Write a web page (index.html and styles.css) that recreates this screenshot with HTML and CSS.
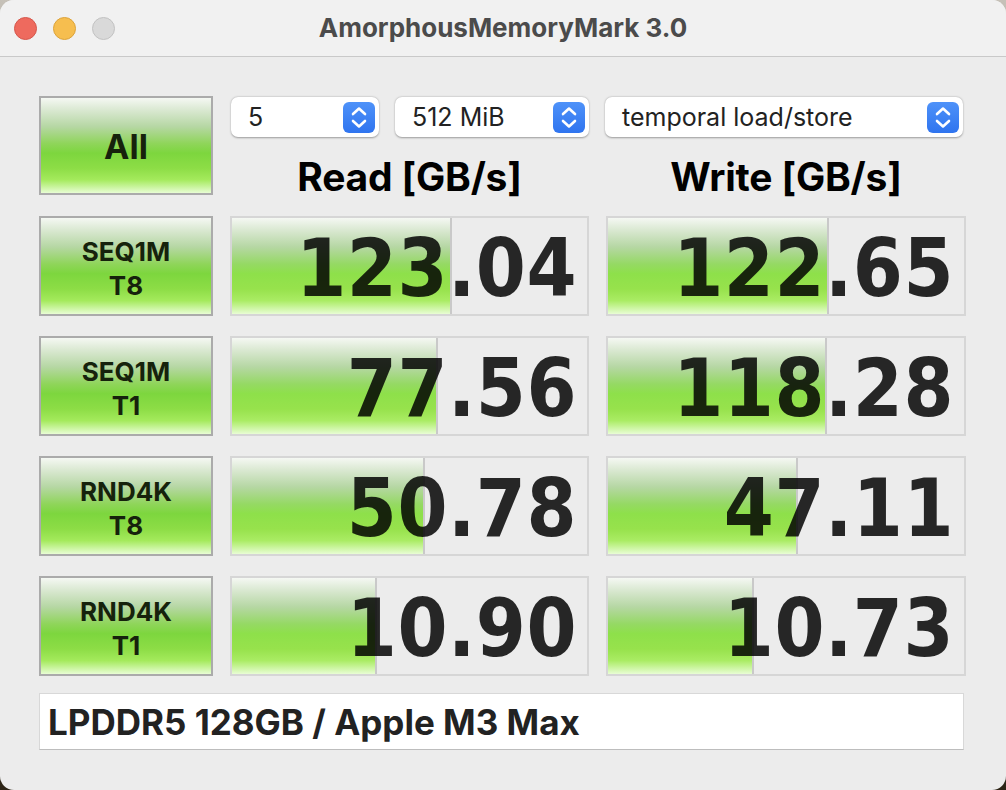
FILE: index.html
```html
<!DOCTYPE html>
<html lang="en">
<head>
  <meta charset="UTF-8">
  <meta name="viewport" content="width=device-width, initial-scale=1.0">
  <title>AmorphousMemoryMark 3.0</title>
  <link rel="stylesheet" href="styles.css">
</head>
<body>
  <div class="window">

    <!-- Title bar -->
    <div class="titlebar">
      <div class="lights">
        <span class="light red"></span>
        <span class="light yellow"></span>
        <span class="light gray"></span>
      </div>
      <div class="title">AmorphousMemoryMark 3.0</div>
    </div>

    <!-- Main content -->
    <div class="content">
      <div class="grid">
        <div class="btn btn-all">All</div>

        <div class="head">
          <div class="selects">
            <div class="select sel-count"><span>5</span><i class="stepper"><svg viewBox="0 0 32 31"><path d="M10 12 L16 6.5 L22 12 M10 19 L16 24.5 L22 19"/></svg></i></div>
            <div class="select sel-size"><span>512 MiB</span><i class="stepper"><svg viewBox="0 0 32 31"><path d="M10 12 L16 6.5 L22 12 M10 19 L16 24.5 L22 19"/></svg></i></div>
          </div>
          <h2>Read [GB/s]</h2>
        </div>

        <div class="head">
          <div class="selects">
            <div class="select sel-mode"><span>temporal load/store</span><i class="stepper"><svg viewBox="0 0 32 31"><path d="M10 12 L16 6.5 L22 12 M10 19 L16 24.5 L22 19"/></svg></i></div>
          </div>
          <h2>Write [GB/s]</h2>
        </div>

        <!-- SEQ1M T8 -->
        <div class="btn">SEQ1M<br>T8</div>
        <div class="score"><div class="fill" style="width: 62%"></div><span>123.04</span></div>
        <div class="score"><div class="fill" style="width: 62%"></div><span>122.65</span></div>

        <!-- SEQ1M T1 -->
        <div class="btn">SEQ1M<br>T1</div>
        <div class="score"><div class="fill" style="width: 58%"></div><span>77.56</span></div>
        <div class="score"><div class="fill" style="width: 61.6%"></div><span>118.28</span></div>

        <!-- RND4K T8 -->
        <div class="btn">RND4K<br>T8</div>
        <div class="score"><div class="fill" style="width: 54.3%"></div><span>50.78</span></div>
        <div class="score"><div class="fill" style="width: 53.5%"></div><span>47.11</span></div>

        <!-- RND4K T1 -->
        <div class="btn">RND4K<br>T1</div>
        <div class="score"><div class="fill" style="width: 40.8%"></div><span>10.90</span></div>
        <div class="score"><div class="fill" style="width: 40.9%"></div><span>10.73</span></div>
      </div>

      <div class="comment">LPDDR5 128GB / Apple M3 Max</div>
    </div>
  </div>
</body>
</html>
```

FILE: styles.css
```css
/* Basic styling */
body {
  margin: 0;
  background: linear-gradient(to bottom, #c6c1b8, #2c2416);
  font-family: Inter, "Liberation Sans", sans-serif;
  overflow: hidden;
}
.window {
  width: 1006px;
  height: 790px;
  background-color: #ececec;
  border-radius: 14px;
  overflow: hidden;
}

/* Title bar */
.titlebar {
  position: relative;
  height: 56px;
  background-color: #f1f1f1;
  border-bottom: 1px solid #c9c9c9;
  display: flex;
  align-items: center;
  justify-content: center;
}
.lights {
  position: absolute;
  left: 14px;
  top: 17px;
  display: flex;
  gap: 16px;
}
.light {
  width: 23px;
  height: 23px;
  border-radius: 50%;
  box-sizing: border-box;
}
.light.red {
  background-color: #ee6a5e;
  border: 1px solid #d5574c;
}
.light.yellow {
  background-color: #f6be4f;
  border: 1px solid #dca33a;
}
.light.gray {
  background-color: #d9d9d9;
  border: 1px solid #c2c2c2;
}
.title {
  font-size: 26px;
  font-weight: 700;
  color: #4b4b4b;
  letter-spacing: 0;
  margin-top: -1px;
}

/* Grid of buttons and results */
.content {
  padding: 39px 40px 0 39px;
}
.grid {
  display: grid;
  grid-template-columns: 174px 359px 360px;
  grid-auto-rows: 100px;
  column-gap: 17px;
  row-gap: 20px;
}
.btn {
  box-sizing: border-box;
  border: 2px solid #ababab;
  background: linear-gradient(to bottom, #f5f8f3 0%, #dbe9d3 12%, #b6d7a4 30%, #8fd55a 48%, #7dd63e 58%, #8ddd46 74%, #a4ea5c 86%, #e8fdd4 100%);
  color: #16220c;
  font-weight: 700;
  font-size: 26px;
  line-height: 34px;
  text-align: center;
  display: flex;
  align-items: center;
  justify-content: center;
  padding-top: 6px;
}
.btn-all {
  font-size: 34px;
  height: 99px;
  padding-top: 2px;
}

/* Column heads with select boxes */
.head {
  display: flex;
  flex-direction: column;
}
.selects {
  display: flex;
  gap: 16px;
  margin-top: 1px;
}
.select {
  box-sizing: border-box;
  height: 40px;
  background-color: #ffffff;
  border-radius: 7px;
  box-shadow: 0 0.5px 2px rgba(0, 0, 0, 0.35);
  display: flex;
  align-items: center;
  justify-content: space-between;
  padding: 0 4px 0 17px;
  font-size: 25px;
  color: #222222;
}
.sel-count {
  width: 148px;
  margin-left: 1px;
}
.sel-size {
  width: 194px;
}
.sel-mode {
  width: 358px;
  margin-left: -1px;
}
.stepper {
  width: 32px;
  height: 31px;
  border-radius: 6px;
  background: linear-gradient(to bottom, #4e92f9, #2f74ef);
  display: block;
}
.stepper svg {
  width: 32px;
  height: 31px;
  display: block;
}
.stepper path {
  fill: none;
  stroke: #ffffff;
  stroke-width: 2.6;
  stroke-linecap: round;
  stroke-linejoin: round;
}
.head h2 {
  margin: 18px 0 0;
  font-size: 39px;
  font-weight: 700;
  line-height: 44px;
  text-align: center;
  color: #000000;
  letter-spacing: -0.2px;
}

/* Score boxes */
.score {
  position: relative;
  box-sizing: border-box;
  border: 2px solid #d6d6d6;
  background-color: #ececec;
  display: flex;
  align-items: center;
  justify-content: flex-end;
  padding-right: 10px;
}
.score .fill {
  position: absolute;
  left: 0;
  top: 0;
  bottom: 0;
  box-sizing: border-box;
  border-right: 2px solid #c9c9c9;
  background: linear-gradient(to bottom, #f5f8f3 0%, #dbe9d3 12%, #b6d7a4 30%, #95d964 48%, #8ee04a 58%, #97e24c 74%, #aaec64 86%, #e8fdd4 100%);
}
.score span {
  position: relative;
  font-family: "DejaVu Sans Condensed", "DejaVu Sans", sans-serif;
  font-stretch: condensed;
  font-weight: 700;
  font-size: 80px;
  line-height: 1;
  color: rgba(0, 0, 0, 0.84);
  margin-top: 6px;
  letter-spacing: 0.5px;
}

/* Comment line */
.comment {
  box-sizing: border-box;
  width: 925px;
  height: 57px;
  margin-top: 17px;
  background-color: #ffffff;
  border: 1px solid #d8d8d8;
  border-bottom-color: #bdbdbd;
  padding-left: 8px;
  display: flex;
  align-items: center;
  font-size: 35px;
  font-weight: 700;
  color: #222222;
}
```
